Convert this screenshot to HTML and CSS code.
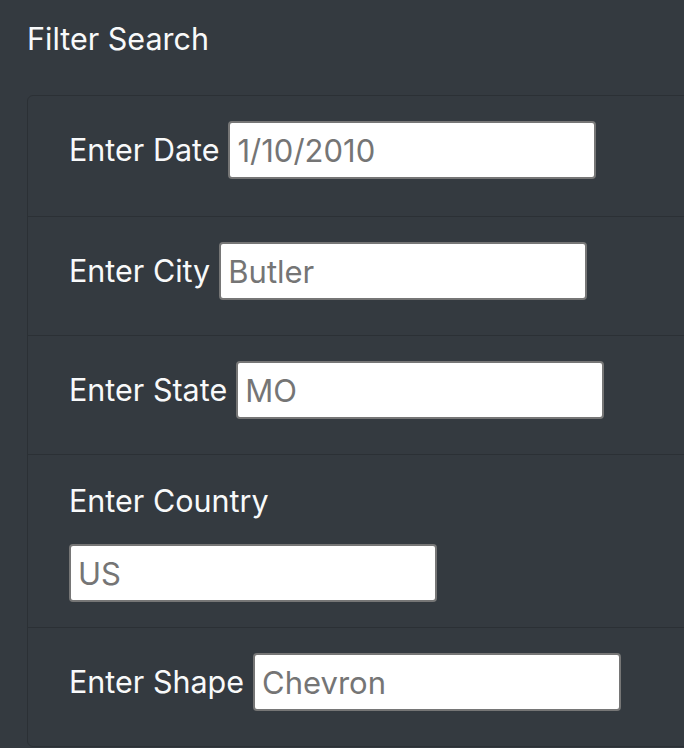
FILE: index.html
```html
<!DOCTYPE html>
<html>
<head>
<meta charset="utf-8">
<link rel="stylesheet" href="styles.css">
</head>
<body>
<h5 class="title">Filter Search</h5>
<ul class="filters">
  <li class="filter">
    <label class="filter-label" for="date">Enter Date</label>
    <input class="filter-input" id="date" type="text" placeholder="1/10/2010">
  </li>
  <li class="filter">
    <label class="filter-label" for="city">Enter City</label>
    <input class="filter-input" id="city" type="text" placeholder="Butler">
  </li>
  <li class="filter">
    <label class="filter-label" for="state">Enter State</label>
    <input class="filter-input" id="state" type="text" placeholder="MO">
  </li>
  <li class="filter filter-stacked">
    <label class="filter-label" for="country">Enter Country</label>
    <input class="filter-input" id="country" type="text" placeholder="US">
  </li>
  <li class="filter">
    <label class="filter-label" for="shape">Enter Shape</label>
    <input class="filter-input" id="shape" type="text" placeholder="Chevron">
  </li>
</ul>
</body>
</html>
```

FILE: styles.css
```css
html, body {
  margin: 0;
  padding: 0;
  background: #343a40;
  overflow: hidden;
}
body {
  width: 684px;
  height: 748px;
  font-family: Inter, "Liberation Sans", sans-serif;
  color: #f8f9fa;
}
.title {
  margin: 0;
  padding: 18px 0 0 27px;
  font-size: 30.5px;
  font-weight: 400;
  line-height: 42px;
  height: 95px;
  box-sizing: border-box;
}
.filters {
  list-style: none;
  margin: 0 -40px 0 27px;
  padding: 0;
  border: 1px solid #2b3035;
  border-radius: 6px;
}
.filter {
  display: flex;
  align-items: center;
  gap: 9px;
  padding: 25px 0 35px 41px;
  border-top: 1px solid #2b3035;
}
.filter:first-child {
  border-top: none;
  padding-bottom: 37px;
}
.filter-stacked {
  flex-direction: column;
  align-items: flex-start;
  gap: 22px;
  padding-bottom: 25px;
}
.filter-label {
  font-size: 30.5px;
  line-height: 42px;
  color: #f8f9fa;
}
.filter-input {
  box-sizing: border-box;
  width: 368px;
  height: 58px;
  margin: 0;
  padding: 0 7px;
  border: 2px solid #767676;
  border-radius: 4px;
  background: #fff;
  font-family: inherit;
  font-size: 31px;
  color: #333;
  outline: none;
}
.filter-input::placeholder {
  color: #757575;
  opacity: 1;
}
```
